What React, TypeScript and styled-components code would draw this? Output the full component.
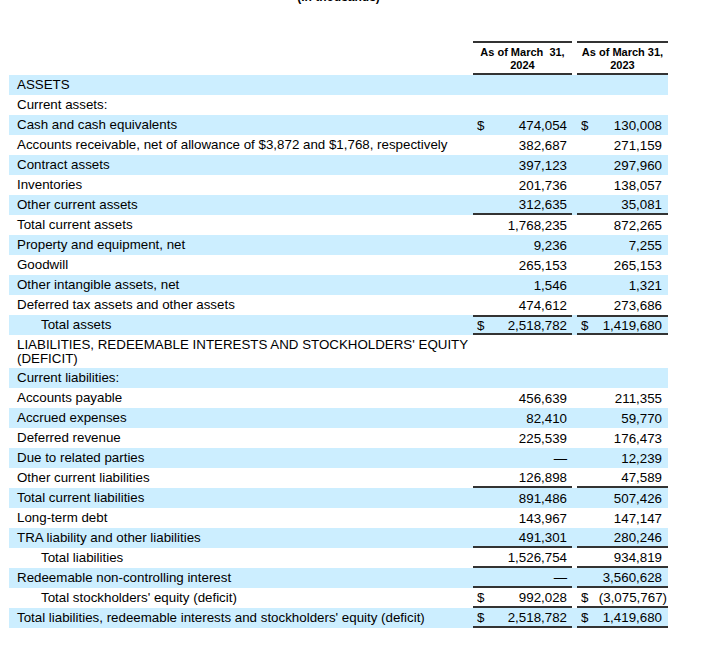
import React from "react";
import styled, { createGlobalStyle } from "styled-components";

const Global = createGlobalStyle`
  html, body { margin: 0; padding: 0; background: #ffffff; }
  body { font-family: "Liberation Sans", Arial, sans-serif; color: #000; }
`;

const Page = styled.div`
  width: 659px;
  margin-left: 9px;
`;

const Caption = styled.div`
  margin-top: -9px;
  height: 13px;
  line-height: 13px;
  text-align: center;
  font-size: 12px;
  font-weight: bold;
`;

const Table = styled.div`
  margin-top: 37px;
  display: flex;
  flex-direction: column;
`;

const cols = "464px 99px 5px 91px";

const HeadRow = styled.div`
  display: grid;
  grid-template-columns: ${cols};
`;

const HeadCell = styled.div`
  border-top: 2px solid #333;
  border-bottom: 2px solid #333;
  padding: 3px 0 1px;
  text-align: center;
  font-size: 11px;
  line-height: 13px;
  font-weight: bold;
  white-space: pre;
`;

const Row = styled.div<{ $shade?: boolean; $tall?: boolean }>`
  display: grid;
  grid-template-columns: ${cols};
  background: ${(p) => (p.$shade ? "#cceeff" : "transparent")};
  height: ${(p) => (p.$tall ? "33px" : "20px")};
  font-size: 13.33px;
`;

const Label = styled.div<{ $indent?: boolean; $tall?: boolean }>`
  padding-left: ${(p) => (p.$indent ? "32px" : "8px")};
  display: flex;
  align-items: center;
  line-height: ${(p) => (p.$tall ? "14px" : "20px")};
  white-space: nowrap;
`;

const Amount = styled.div<{ $top?: boolean; $bottom?: boolean; $right?: number }>`
  display: flex;
  justify-content: space-between;
  align-items: center;
  padding: 0 ${(p) => p.$right ?? 5}px 0 4px;
  border-top: ${(p) => (p.$top ? "2px solid #333" : "0")};
  border-bottom: ${(p) => (p.$bottom ? "2px solid #333" : "0")};
  box-sizing: border-box;
  white-space: nowrap;
`;

const Paren = styled.span`
  margin-right: -5px;
`;

type Line = {
  label: React.ReactNode;
  a?: string;
  b?: string;
  dollar?: boolean;
  indent?: boolean;
  top?: boolean;
  bottom?: boolean;
  tall?: boolean;
};

const lines: Line[] = [
  { label: "ASSETS" },
  { label: "Current assets:" },
  { label: "Cash and cash equivalents", a: "474,054", b: "130,008", dollar: true },
  { label: "Accounts receivable, net of allowance of $3,872 and $1,768, respectively", a: "382,687", b: "271,159" },
  { label: "Contract assets", a: "397,123", b: "297,960" },
  { label: "Inventories", a: "201,736", b: "138,057" },
  { label: "Other current assets", a: "312,635", b: "35,081", bottom: true },
  { label: "Total current assets", a: "1,768,235", b: "872,265" },
  { label: "Property and equipment, net", a: "9,236", b: "7,255" },
  { label: "Goodwill", a: "265,153", b: "265,153" },
  { label: "Other intangible assets, net", a: "1,546", b: "1,321" },
  { label: "Deferred tax assets and other assets", a: "474,612", b: "273,686" },
  { label: "Total assets", a: "2,518,782", b: "1,419,680", dollar: true, indent: true, top: true, bottom: true },
  {
    label: (
      <>
        LIABILITIES, REDEEMABLE INTERESTS AND STOCKHOLDERS' EQUITY
        <br />
        (DEFICIT)
      </>
    ),
    tall: true,
  },
  { label: "Current liabilities:" },
  { label: "Accounts payable", a: "456,639", b: "211,355" },
  { label: "Accrued expenses", a: "82,410", b: "59,770" },
  { label: "Deferred revenue", a: "225,539", b: "176,473" },
  { label: "Due to related parties", a: "—", b: "12,239" },
  { label: "Other current liabilities", a: "126,898", b: "47,589", bottom: true },
  { label: "Total current liabilities", a: "891,486", b: "507,426" },
  { label: "Long-term debt", a: "143,967", b: "147,147" },
  { label: "TRA liability and other liabilities", a: "491,301", b: "280,246", bottom: true },
  { label: "Total liabilities", a: "1,526,754", b: "934,819", indent: true, bottom: true },
  { label: "Redeemable non-controlling interest", a: "—", b: "3,560,628", bottom: true },
  { label: "Total stockholders' equity (deficit)", a: "992,028", b: "(3,075,767)", dollar: true, indent: true, bottom: true },
  { label: "Total liabilities, redeemable interests and stockholders' equity (deficit)", a: "2,518,782", b: "1,419,680", dollar: true, bottom: true },
];

function Value({ v }: { v?: string }) {
  if (!v) return <span />;
  if (v.endsWith(")")) {
    return (
      <span>
        {v.slice(0, -1)}
        <Paren>)</Paren>
      </span>
    );
  }
  return <span>{v}</span>;
}

export default function App() {
  return (
    <>
      <Global />
      <Page>
        <Caption>(In thousands)</Caption>
        <Table>
          <HeadRow>
            <div />
            <HeadCell>{"As of March  31,\n2024"}</HeadCell>
            <div />
            <HeadCell>{"As of March 31,\n2023"}</HeadCell>
          </HeadRow>
          {lines.map((l, i) => {
            const hasAmounts = l.a !== undefined;
            return (
              <Row key={i} $shade={i % 2 === 0} $tall={l.tall}>
                <Label $indent={l.indent} $tall={l.tall}>
                  <span>{l.label}</span>
                </Label>
                {hasAmounts ? (
                  <>
                    <Amount $top={l.top} $bottom={l.bottom}>
                      <span>{l.dollar ? "$" : ""}</span>
                      <Value v={l.a} />
                    </Amount>
                    <div />
                    <Amount $top={l.top} $bottom={l.bottom} $right={6}>
                      <span>{l.dollar ? "$" : ""}</span>
                      <Value v={l.b} />
                    </Amount>
                  </>
                ) : (
                  <>
                    <div />
                    <div />
                    <div />
                  </>
                )}
              </Row>
            );
          })}
        </Table>
      </Page>
    </>
  );
}
